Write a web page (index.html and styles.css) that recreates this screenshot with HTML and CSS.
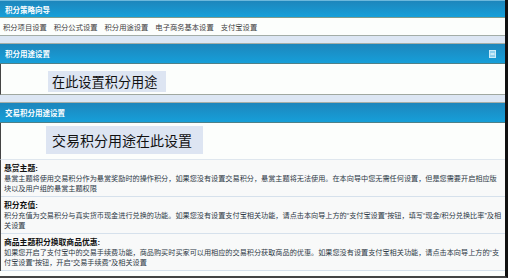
FILE: index.html
```html
<!DOCTYPE html>
<html lang="zh-CN">
<head>
    <meta charset="UTF-8">
    <title>积分策略向导</title>
    <link rel="stylesheet" href="styles.css">
</head>
<body>
    <div class="page">
        <!-- Wizard title -->
        <div class="bar bar-top">积分策略向导</div>

        <!-- Wizard steps -->
        <div class="nav">
            <a href="#">积分项目设置</a>
            <a href="#">积分公式设置</a>
            <a href="#">积分用途设置</a>
            <a href="#">电子商务基本设置</a>
            <a href="#">支付宝设置</a>
        </div>
        <div class="strip"></div>

        <!-- Credit usage -->
        <div class="bar">
            <span>积分用途设置</span>
            <svg class="toggle" width="7" height="8" viewBox="0 0 7 8">
                <rect x="0.5" y="0.5" width="6" height="7" fill="#8fd0ee" stroke="#cdebf8"/>
                <line x1="1.5" y1="4" x2="5.5" y2="4" stroke="#f4fbff" stroke-width="1.2"/>
            </svg>
        </div>
        <div class="panel">
            <div class="note">在此设置积分用途</div>
        </div>
        <div class="strip"></div>

        <!-- Trade credit usage -->
        <div class="bar">交易积分用途设置</div>
        <div class="panel panel-trade">
            <div class="note note-big">交易积分用途在此设置</div>
        </div>

        <!-- Help texts -->
        <div class="tips">
            <div class="tip">
                <h4>悬赏主题:</h4>
                <p>悬赏主题将使用交易积分作为悬赏奖励时的操作积分，如果您没有设置交易积分，悬赏主题将无法使用。在本向导中您无需任何设置，但是您需要开启相应版<br>块以及用户组的悬赏主题权限</p>
            </div>
            <div class="tip">
                <h4>积分充值:</h4>
                <p>积分充值为交易积分与真实货币现金进行兑换的功能。如果您没有设置支付宝相关功能，请点击本向导上方的“支付宝设置”按钮，填写“现金/积分兑换比率”及相<br>关设置</p>
            </div>
            <div class="tip">
                <h4>商品主题积分换取商品优惠:</h4>
                <p>如果您开启了支付宝中的交易手续费功能，商品购买时买家可以用相应的交易积分获取商品的优惠。如果您没有设置支付宝相关功能，请点击本向导上方的“支<br>付宝设置”按钮，开启“交易手续费”及相关设置</p>
            </div>
        </div>
    </div>
</body>
</html>
```

FILE: styles.css
```css
body {
    margin: 0;
    font-family: "Liberation Sans", "Noto Sans CJK SC", sans-serif;
    font-size: 7.3px;
    color: #333;
    background-color: #fff;
}

.page {
    width: 505px;
    height: 276px;
    border-right: 3px solid #111;
    border-bottom: 2px solid #444;
    background-color: #fcfefc;
    overflow: hidden;
}

/* Blue section bars */
.bar {
    display: flex;
    align-items: center;
    justify-content: space-between;
    height: 19px;
    padding: 0 9px 0 5px;
    background: linear-gradient(#1d86bc, #169fd9);
    border-bottom: 1px solid #4f8087;
    color: #fff;
    font-weight: bold;
    font-size: 7.5px;
}

.bar-top {
    height: 16px;
    border-top: 1px solid #6cb8dc;
    border-bottom: 1px solid #7f9b8d;
}

.toggle {
    display: block;
}

.nav {
    display: flex;
    gap: 7px;
    align-items: center;
    height: 17px;
    padding-left: 3px;
    background-color: #fcfefc;
    border-bottom: 1px solid #a3ada7;
}

.nav a {
    color: #3c3c3c;
    text-decoration: none;
}

.strip {
    height: 7px;
    background-color: #dce6f3;
    border-bottom: 1px solid #a6aea7;
}

.panel {
    height: 31px;
    border-left: 1px solid #444;
    border-bottom: 1px solid #a0a8a0;
    padding-top: 7px;
    box-sizing: border-box;
}

.panel-trade {
    height: 37px;
    padding-top: 3px;
    border-bottom: 1px solid #dfe7ee;
}

.note {
    display: flex;
    align-items: center;
    width: 118px;
    height: 21px;
    margin-left: 47px;
    padding-left: 4px;
    box-sizing: border-box;
    background-color: #dde5f2;
    color: #111;
    font-size: 13.2px;
}

.note-big {
    width: 157px;
    height: 28px;
    margin-left: 45px;
    padding-left: 6px;
    font-size: 14px;
}

.tips {
    border-left: 1px solid #444;
    background-color: #f8f9f9;
}

.tip {
    height: 37px;
    padding: 3px 0 0 3px;
    box-sizing: border-box;
    border-bottom: 1px solid #d6e1ec;
}

.tip h4 {
    margin: 0;
    height: 11px;
    line-height: 11px;
    font-size: 7.8px;
    color: #111;
}

.tip p {
    margin: 0;
    line-height: 10px;
    font-size: 7.15px;
    white-space: nowrap;
    color: #2c3845;
}
```
